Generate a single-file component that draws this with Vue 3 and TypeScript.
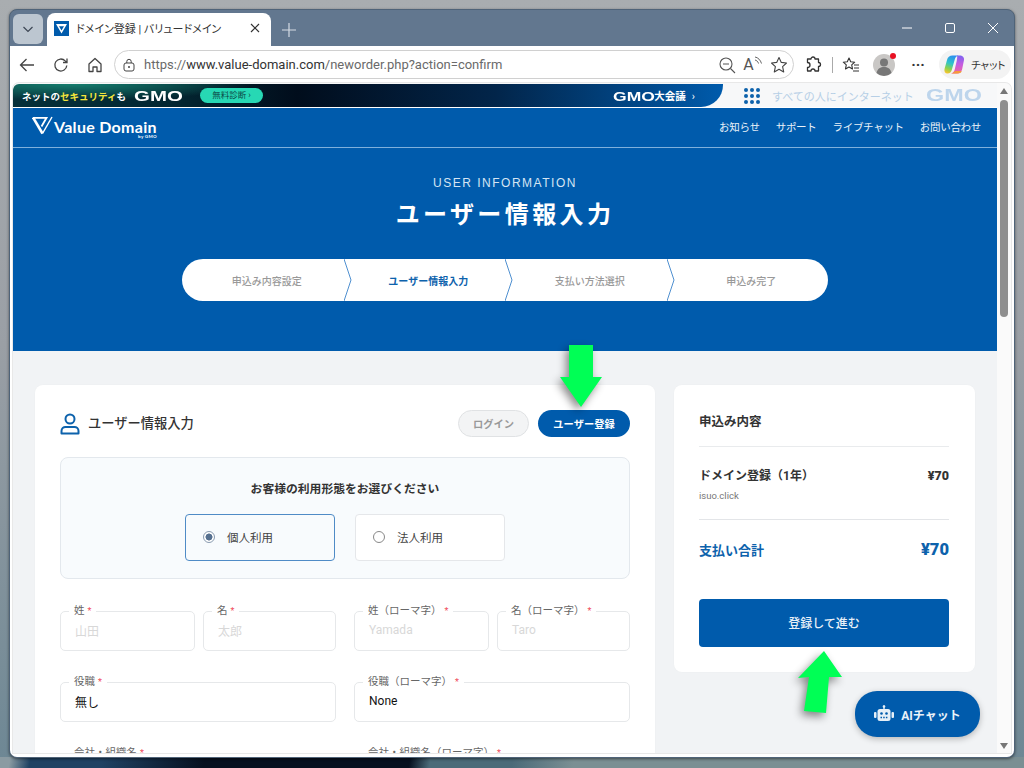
<template>
	<div class="desktop">
		<div class="window">
			<div class="tabbar">
				<button class="tab-menu">
					<svg width="14" height="14" viewBox="0 0 14 14"><path d="M2.500 5l4.500 4.500L11.500 5" fill="none" stroke="#3c4654" stroke-width="1.200" /></svg>
				</button>
				<div class="tab">
					<span class="favicon">
						<svg width="15" height="15" viewBox="0 0 15 15"><rect width="15" height="15" fill="#005bac" /><path d="M2 3h11l-5.500 9.500zM5 5.200l2.500 4.300 2.500-4.300z" fill="#fff" fill-rule="evenodd" /></svg>
					</span>
					<span class="tab-title">ドメイン登録 | バリュードメイン</span>
					<svg class="tab-close" width="10" height="10" viewBox="0 0 10 10"><path d="M1 1l8 8M9 1l-8 8" stroke="#333" stroke-width="1.200" /></svg>
				</div>
				<svg class="new-tab" width="14" height="14" viewBox="0 0 14 14"><path d="M7 0v14M0 7h14" stroke="#d5dce4" stroke-width="1.200" /></svg>
				<div class="win-controls">
					<svg width="10" height="10" viewBox="0 0 10 10"><path d="M0 5h10" stroke="#fff" stroke-width="1" /></svg>
					<svg width="10" height="10" viewBox="0 0 10 10"><rect x=".5" y=".5" width="9" height="9" rx="1.500" fill="none" stroke="#fff" /></svg>
					<svg width="10" height="10" viewBox="0 0 10 10"><path d="M0 0l10 10M10 0L0 10" stroke="#fff" stroke-width="1" /></svg>
				</div>
			</div>

			<div class="frame">
				<div class="toolbar">
					<svg class="tool" width="18" height="18" viewBox="0 0 18 18"><path d="M16 9H2.500M8.500 3l-6 6 6 6" fill="none" stroke="#444" stroke-width="1.300" /></svg>
					<svg class="tool" width="18" height="18" viewBox="0 0 18 18"><path d="M14.800 9.500a6 6 0 1 1-1.600-4.600L15 6.500M15 2.500v4h-4" fill="none" stroke="#444" stroke-width="1.300" /></svg>
					<svg class="tool home" width="18" height="18" viewBox="0 0 18 18"><path d="M3 8l6-5.500L15 8v7.500h-4V11H7v4.500H3z" fill="none" stroke="#444" stroke-width="1.300" stroke-linejoin="round" /></svg>
					<div class="address">
						<svg width="14" height="14" viewBox="0 0 14 14"><rect x="2" y="5" width="10" height="8" rx="2" fill="none" stroke="#444" /><path d="M4.800 5V3.500a2.200 2.200 0 0 1 4.400 0V5" fill="none" stroke="#444" /><circle cx="7" cy="9" r="1" fill="#444" /></svg>
						<span class="url"><span class="url-dim">https://</span>www.value-domain.com<span class="url-dim">/neworder.php?action=confirm</span></span>
						<span class="address-icons">
							<svg width="18" height="18" viewBox="0 0 18 18"><circle cx="8" cy="8" r="6" fill="none" stroke="#555" stroke-width="1.100" /><path d="M5 8h6M12.500 12.500L17 17" stroke="#555" stroke-width="1.100" fill="none" /></svg>
							<span class="read-aloud">A<svg width="9" height="9" viewBox="0 0 9 9"><path d="M1 1c3 .5 5.500 3 6.500 6.500M1 4c1.500.3 3 1.500 3.500 3.500" fill="none" stroke="#666" /></svg></span>
							<svg width="18" height="18" viewBox="0 0 18 18"><path d="M9 1.500l2.300 4.900 5.200.6-3.900 3.600 1.100 5.300L9 13.200l-4.700 2.700 1.100-5.300L1.500 7l5.200-.6z" fill="none" stroke="#444" stroke-width="1.100" stroke-linejoin="round" /></svg>
						</span>
					</div>
					<svg class="tool puzzle" width="18" height="18" viewBox="0 0 18 18"><path d="M7 3a2 2 0 0 1 4 0h3.500v3.500a2 2 0 0 1 0 4V15H11a2 2 0 0 0-4 0H3.500v-3.500a2.500 2.500 0 0 0 0-5V3z" fill="none" stroke="#333" stroke-width="1.300" stroke-linejoin="round" /></svg>
					<span class="tool-sep"></span>
					<svg class="tool favs" width="18" height="18" viewBox="0 0 18 18"><path d="M7 2l1.700 3.700 4 .5-3 2.700.8 4L7 11l-3.500 1.900.8-4-3-2.700 4-.5zM12 9h5M12 12h5M11 15h6" fill="none" stroke="#333" stroke-width="1.100" stroke-linejoin="round" /></svg>
					<span class="avatar">
						<svg width="22" height="22" viewBox="0 0 22 22"><circle cx="11" cy="11" r="11" fill="#c9c7c5" /><circle cx="11" cy="8.500" r="4" fill="#777" /><path d="M3.500 19c1-4.500 4-6 7.500-6s6.500 1.500 7.500 6a11 11 0 0 1-15 0z" fill="#777" /></svg>
						<span class="avatar-dot"></span>
					</span>
					<span class="more">···</span>
					<div class="copilot">
						<svg width="21" height="21" viewBox="0 0 21 21">
							<defs>
								<linearGradient id="copilot-left" x1="0.600" y1="0" x2="0.300" y2="1">
									<stop offset="0" stop-color="#2b8df0" />
									<stop offset="0.450" stop-color="#2fc4c8" />
									<stop offset="0.750" stop-color="#8ad24e" />
									<stop offset="1" stop-color="#f5c52e" />
								</linearGradient>
								<linearGradient id="copilot-right" x1="0.500" y1="0" x2="0.500" y2="1">
									<stop offset="0" stop-color="#7b63f0" />
									<stop offset="0.500" stop-color="#c65be0" />
									<stop offset="1" stop-color="#f0649c" />
								</linearGradient>
							</defs>
							<path d="M8.500 1.500h6c-2 .5-3 1.500-3.600 3.500l-3 10.500c-.6 2.500-2 4-4.400 4-2.500 0-3.500-2-3-4.500L3 6C3.700 3 5.500 1.500 8.500 1.500z" fill="url(#copilot-left)" />
							<path d="M13 1.500h2.500c3 0 5 2 4.500 4.500l-1.800 9c-.6 3-2.700 4.500-5.200 4.500H7c2-.5 3.200-2 3.700-4l2-8.500C13 5 13.500 3 13 1.500z" fill="url(#copilot-right)" />
							<path d="M7 19.500h7c1.700 0 3-.8 3.800-2.200-2.300-.5-5-.3-6.800-.3-.8 1.300-2.200 2.200-4 2.500z" fill="#f59a3c" />
						</svg>
						<span>チャット</span>
					</div>
				</div>

				<div class="viewport">
					<div class="page">
						<div class="gmo-bar">
							<div class="gmo-left">
								<span class="gmo-copy">ネットの<em>セキュリティ</em>も</span>
								<span class="gmo-logo">GMO</span>
								<span class="gmo-pill">無料診断 ›</span>
								<span class="gmo-event"><span class="gmo-logo small">GMO</span>大会議<span class="gmo-caret">›</span></span>
							</div>
							<div class="gmo-right">
								<span class="dots"><i v-for="n in 9" :key="n"></i></span>
								<span class="gmo-tagline">すべての人にインターネット</span>
								<span class="gmo-logo pale">GMO</span>
							</div>
						</div>

						<header class="hero">
							<nav class="site-nav">
								<div class="brand">
									<svg width="21" height="19" viewBox="0 0 21 19">
										<path d="M1 1.500L10.500 17.500" fill="none" stroke="#fff" stroke-width="2.600" />
										<path d="M10.500 17.500L20 1" fill="none" stroke="#fff" stroke-width="1.500" />
										<path d="M1 1.800H14.500L9.500 10.500" fill="none" stroke="#fff" stroke-width="1.800" />
									</svg>
									<div class="brand-text">
										<span>Value Domain</span>
										<small>by GMO</small>
									</div>
								</div>
								<div class="nav-links">
									<a v-for="link in navLinks" :key="link">{{ link }}</a>
								</div>
							</nav>
							<p class="hero-sub">USER INFORMATION</p>
							<h1 class="hero-title">ユーザー情報入力</h1>
							<ol class="steps">
								<li v-for="(step, i) in steps" :key="step" :class="{ current: i === 1 }">
									<span>{{ step }}</span>
									<svg v-if="i < steps.length - 1" class="chevron" width="8" height="42" viewBox="0 0 8 42"><path d="M0 0l7 21-7 21" fill="none" stroke="#4f8fd0" /></svg>
								</li>
							</ol>
						</header>

						<main class="content">
							<section class="card form-card">
								<div class="form-head">
									<svg width="20" height="22" viewBox="0 0 20 22"><circle cx="10" cy="6" r="4.500" fill="none" stroke="#0d62ac" stroke-width="2" /><path d="M1.500 20.500v-2.500c0-2.500 2-4 4-4h9c2 0 4 1.500 4 4v2.500z" fill="none" stroke="#0d62ac" stroke-width="2" stroke-linejoin="round" /></svg>
									<h2>ユーザー情報入力</h2>
									<button class="pill login">ログイン</button>
									<button class="pill register">ユーザー登録</button>
								</div>

								<div class="usage">
									<h3>お客様の利用形態をお選びください</h3>
									<div class="usage-options">
										<label class="option selected"><span class="radio"></span><span>個人利用</span></label>
										<label class="option"><span class="radio"></span><span>法人利用</span></label>
									</div>
								</div>

								<div class="fields">
									<div v-for="(group, g) in fieldGroups" :key="g" class="field-group" :class="{ pair: group.length > 1 }">
										<div v-for="f in group" :key="f.label" class="field">
											<span class="field-label">{{ f.label }}<b>*</b></span>
											<span class="field-value" :class="{ empty: f.placeholder }">{{ f.value || f.placeholder }}</span>
										</div>
									</div>
								</div>
							</section>

							<aside class="card summary">
								<h2>申込み内容</h2>
								<div class="summary-item">
									<div class="summary-row"><span>ドメイン登録（1年）</span><strong>¥70</strong></div>
									<p>isuo.click</p>
								</div>
								<div class="summary-total"><span>支払い合計</span><strong>¥70</strong></div>
								<button class="proceed">登録して進む</button>
							</aside>
						</main>
					</div>

					<div class="scrollbar">
						<span class="arrow up"></span>
						<span class="thumb"></span>
						<span class="arrow down"></span>
					</div>

					<button class="ai-chat">
						<svg width="20" height="18" viewBox="0 0 20 18"><rect x="3.500" y="4" width="13" height="12" rx="2.500" fill="#e6eff7" /><rect x="9.300" y="0.500" width="1.400" height="4" fill="#e6eff7" /><circle cx="10" cy="1.500" r="1.300" fill="#e6eff7" /><rect x="0" y="7" width="2.500" height="6" rx="1" fill="#e6eff7" /><rect x="17.500" y="7" width="2.500" height="6" rx="1" fill="#e6eff7" /><circle cx="7.500" cy="8.500" r="1.300" fill="#005bac" /><circle cx="12.500" cy="8.500" r="1.300" fill="#005bac" /><path d="M6.500 12.500h7" stroke="#005bac" stroke-width="1.300" stroke-dasharray="1.500 1.200" /></svg>
						AIチャット
					</button>

					<svg class="mark mark-down" width="42" height="62" viewBox="0 0 42 62"><path d="M9 0h24v32h9L21 62 0 32h9z" fill="#00ff55" /></svg>
					<svg class="mark mark-up" width="44" height="64" viewBox="0 0 44 64"><path d="M26 0l18 26-13 0-3 36-22-2 5-34-11 1z" fill="#00ff55" /></svg>
				</div>
			</div>
		</div>
	</div>
</template>

<script setup lang="ts">
interface Field {
	label: string
	value?: string
	placeholder?: string
}

const navLinks = ['お知らせ', 'サポート', 'ライブチャット', 'お問い合わせ']
const steps = ['申込み内容設定', 'ユーザー情報入力', '支払い方法選択', '申込み完了']

const fieldGroups: Field[][] = [
	[{ label: '姓', placeholder: '山田' }, { label: '名', placeholder: '太郎' }],
	[{ label: '姓（ローマ字）', placeholder: 'Yamada' }, { label: '名（ローマ字）', placeholder: 'Taro' }],
	[{ label: '役職', value: '無し' }],
	[{ label: '役職（ローマ字）', value: 'None' }],
	[{ label: '会社・組織名' }],
	[{ label: '会社・組織名（ローマ字）' }],
]
</script>

<style>
html,
body {
	margin: 0;
	overflow: hidden;
}
</style>

<style scoped>
* {
	box-sizing: border-box;
}

.desktop {
	width: 1024px;
	height: 768px;
	padding: 9px;
	overflow: hidden;
	font-family: Roboto, 'Noto Sans CJK JP', sans-serif;
	background:
		linear-gradient(100deg, #8b9ba2 0 1%, #1f4263 3% 10%, #06101f 20% 40%, #4a6a78 42% 50%, #7b8f93 56% 100%) bottom / 100% 11px no-repeat,
		linear-gradient(180deg, #a9adb0 0%, #9a9fa5 45%, #6d8794 100%);
}

.window {
	display: flex;
	flex-direction: column;
	width: 1006px;
	height: 749px;
	overflow: hidden;
	border: 1px solid #4f6378;
	border-radius: 8px;
	background: #62778f;
	box-shadow: 0 1px 3px rgb(0 0 0 / 50%);
}

.tabbar {
	display: flex;
	align-items: center;
	flex: none;
	height: 36px;
	padding: 3px 0 0 3px;
}

.tab-menu {
	display: flex;
	align-items: center;
	justify-content: center;
	width: 30px;
	height: 30px;
	margin-bottom: 2px;
	padding: 0;
	border: none;
	border-radius: 6px;
	background: #bcc6d0;
}

.tab {
	display: flex;
	align-items: center;
	gap: 7px;
	width: 224px;
	height: 33px;
	margin-left: 4px;
	padding: 0 11px 3px 7px;
	border-radius: 8px 8px 0 0;
	background: #fff;
}

.favicon {
	display: flex;
}

.tab-title {
	flex: 1;
	font-size: 11px;
	font-feature-settings: 'palt';
	color: #333;
	white-space: nowrap;
}

.new-tab {
	margin-left: 11px;
}

.win-controls {
	display: flex;
	gap: 33px;
	margin-left: auto;
	padding-right: 16px;
	padding-bottom: 4px;
}

.frame {
	flex: 1;
	padding: 0 3px 4px;
	background: #fff;
}

.toolbar {
	display: flex;
	align-items: center;
	height: 37px;
	padding-left: 5px;
}

.toolbar > * {
	flex: none;
}

.tool {
	margin-right: 16px;
}

.tool.home {
	margin-right: 10px;
}

.address {
	display: flex;
	align-items: center;
	gap: 8px;
	width: 680px;
	height: 29px;
	padding-left: 7px;
	border: 1px solid #d0d0d0;
	border-radius: 15px;
}

.url {
	font-size: 13px;
	color: #333;
	white-space: nowrap;
}

.url-dim {
	color: #6a6a6a;
}

.address-icons {
	display: flex;
	align-items: center;
	gap: 7px;
	margin-left: auto;
	padding-right: 5px;
}

.read-aloud {
	display: flex;
	align-items: flex-start;
	justify-content: center;
	width: 20px;
	font-size: 16px;
	line-height: 18px;
	color: #555;
}

.tool.puzzle {
	margin-left: 10px;
	margin-right: 10px;
}

.tool-sep {
	width: 1px;
	height: 16px;
	margin-right: 9px;
	background: #aaa;
}

.tool.favs {
	margin-right: 13px;
}

.avatar {
	position: relative;
	display: flex;
	margin-right: 15px;
}

.avatar-dot {
	position: absolute;
	top: -1px;
	right: -1px;
	width: 6px;
	height: 6px;
	border-radius: 50%;
	background: #e81123;
}

.more {
	width: 16px;
	margin-right: 13px;
	font-size: 15px;
	font-weight: 700;
	text-align: center;
	color: #333;
}

.copilot {
	display: flex;
	align-items: center;
	gap: 6px;
	width: 72px;
	height: 29px;
	padding-left: 5px;
	border-radius: 15px;
	background: #f3f3f3;
	font-size: 10.500px;
	font-feature-settings: 'palt';
	white-space: nowrap;
	color: #333;
}

.viewport {
	position: relative;
	width: 998px;
	height: 670px;
	overflow: hidden;
	border-radius: 6px 6px 0 0;
	background: #f1f3f5;
	box-shadow: 0 0 0 1px #e8e8e8;
}

.page {
	width: 984px;
}

.gmo-bar {
	display: flex;
	height: 25px;
	padding-top: 1px;
	border-bottom: 1px solid #fff;
	background: #f7f8f9;
}

.gmo-left {
	display: flex;
	align-items: center;
	flex: none;
	width: 710px;
	padding-left: 9px;
	border-radius: 6px 0 22px 0;
	background:
		radial-gradient(ellipse 180px 16px at 60px 0, rgb(25 140 120 / 85%), transparent),
		linear-gradient(90deg, #05303a 0%, #032732 22%, #010d1c 40%, #02254a 68%, #005bac 100%);
	color: #fff;
}

.gmo-copy {
	font-size: 9.500px;
	font-weight: 700;
	white-space: nowrap;
}

.gmo-copy em {
	font-style: normal;
	color: #f5e63c;
}

.gmo-logo {
	display: inline-block;
	flex: none;
	width: 49px;
	margin-left: 8px;
	font-family: 'Liberation Sans', sans-serif;
	font-size: 14px;
	font-weight: 700;
	line-height: 14px;
	white-space: nowrap;
	transform: scaleX(1.460);
	transform-origin: left center;
}

.gmo-logo.small {
	width: 41px;
	margin-left: 0;
	font-size: 12px;
	vertical-align: -1px;
}

.gmo-logo.pale {
	width: 58px;
	margin-left: 12px;
	font-size: 16px;
	color: #bdd5ec;
}

.gmo-pill {
	flex: none;
	width: 63px;
	margin-left: 17px;
	border-radius: 8px;
	background: #27d8b4;
	font-size: 8.500px;
	line-height: 15px;
	text-align: center;
	color: #0b4a48;
}

.gmo-event {
	margin-left: auto;
	padding-right: 28px;
	font-size: 10.500px;
	font-weight: 700;
	white-space: nowrap;
}

.gmo-caret {
	margin-left: 6px;
	font-weight: 400;
}

.gmo-right {
	display: flex;
	align-items: center;
	flex: none;
	padding-left: 21px;
}

.dots {
	display: grid;
	grid-template-columns: repeat(3, 4px);
	gap: 2px;
}

.dots i {
	width: 4px;
	height: 4px;
	border-radius: 50%;
	background: #0d62ac;
}

.gmo-tagline {
	margin-left: 12px;
	font-size: 11px;
	color: #b6cfe6;
	white-space: nowrap;
}

.hero {
	height: 243px;
	background: #005bac;
	color: #fff;
}

.site-nav {
	display: flex;
	align-items: center;
	justify-content: space-between;
	height: 40px;
	padding: 0 16px 2px 19px;
	border-bottom: 1px solid #7fb0dc;
}

.brand {
	display: flex;
	align-items: flex-start;
	gap: 1px;
	margin-top: 1px;
}

.brand-text {
	display: flex;
	flex-direction: column;
	margin-top: 3px;
	font-family: Lato, sans-serif;
	font-size: 16px;
	font-weight: 700;
	line-height: 15px;
	letter-spacing: 0.300px;
}

.brand-text small {
	align-self: flex-end;
	font-size: 4.500px;
	line-height: 5px;
}

.nav-links {
	display: flex;
	gap: 16px;
	font-size: 10.500px;
	letter-spacing: -0.300px;
	color: #eaf2f9;
}

.hero-sub {
	margin: 28px 0 0;
	font-family: 'Liberation Sans', sans-serif;
	font-size: 12px;
	line-height: 14px;
	letter-spacing: 1.500px;
	text-align: center;
	color: #d5e5f3;
}

.hero-title {
	margin: 8px 0 0;
	font-size: 24px;
	font-weight: 700;
	line-height: 34px;
	letter-spacing: 3.400px;
	text-align: center;
}

.steps {
	display: flex;
	width: 646px;
	height: 42px;
	margin: 27px auto 0;
	padding: 0;
	border-radius: 21px;
	background: #fff;
	list-style: none;
}

.steps li {
	position: relative;
	display: flex;
	align-items: center;
	justify-content: center;
	flex: 1;
	padding-left: 8px;
	font-size: 10px;
	font-weight: 500;
	color: #999;
}

.steps li.current {
	font-weight: 700;
	color: #0d62ac;
}

.chevron {
	position: absolute;
	top: 0;
	left: 100%;
	z-index: 1;
}

.content {
	display: flex;
	align-items: flex-start;
	gap: 19px;
	padding: 34px 22px 0;
}

.card {
	border-radius: 8px;
	background: #fff;
	box-shadow: 0 0 2px rgb(0 0 0 / 3%);
}

.form-card {
	width: 620px;
	height: 420px;
	padding: 25px;
}

.form-head {
	display: flex;
	align-items: center;
	height: 27px;
}

.form-head h2 {
	flex: 1;
	margin: 0 0 2px 8px;
	font-size: 13.250px;
	font-weight: 500;
	color: #333;
}

.pill {
	height: 27px;
	padding: 0;
	border-radius: 14px;
	font-family: inherit;
	font-size: 10.250px;
	font-weight: 700;
}

.login {
	width: 71px;
	margin-right: 9px;
	border: 1px solid #e0e2e4;
	background: #f3f4f5;
	color: #999;
}

.register {
	width: 92px;
	border: none;
	background: #005bac;
	color: #fff;
}

.usage {
	height: 122px;
	margin-top: 20px;
	padding-top: 22px;
	border: 1px solid #e3e8ed;
	border-radius: 8px;
	background: #f8fbfd;
}

.usage h3 {
	margin: 0;
	font-size: 11.800px;
	font-weight: 700;
	line-height: 18px;
	text-align: center;
	color: #333;
}

.usage-options {
	display: flex;
	justify-content: center;
	gap: 20px;
	margin-top: 16px;
}

.option {
	display: flex;
	align-items: center;
	gap: 12px;
	width: 150px;
	height: 47px;
	padding: 0 0 2px 17px;
	border: 1px solid #e5e7ea;
	border-radius: 4px;
	background: #fff;
	font-size: 11.500px;
	color: #444;
}

.option.selected {
	border: 1.500px solid #4f8bc6;
	background: #f8fbfd;
}

.radio {
	width: 12px;
	height: 12px;
	border: 1px solid #888;
	border-radius: 50%;
	background: #fff;
}

.selected .radio {
	border-color: #8a9bb0;
	background: radial-gradient(circle, #56708f 0 3.200px, #fff 3.800px);
}

.fields {
	display: grid;
	grid-template-columns: 276px 276px;
	column-gap: 18px;
	row-gap: 31px;
	margin-top: 32px;
}

.field-group {
	display: grid;
}

.field-group.pair {
	grid-template-columns: 134.500px 133px;
	column-gap: 8.500px;
}

.field {
	position: relative;
	display: flex;
	align-items: center;
	height: 40px;
	padding: 0 0 2px 14px;
	border: 1px solid #e6e8ea;
	border-radius: 5px;
	background: #fff;
	font-size: 12px;
	color: #111;
}

.field-label {
	position: absolute;
	top: -9px;
	left: 8px;
	padding: 0 5px;
	background: #fff;
	font-size: 10.500px;
	line-height: 15px;
	color: #666;
	white-space: nowrap;
}

.field-label b {
	margin-left: 3px;
	font-size: 9px;
	font-weight: 400;
	color: #ef4b5a;
}

.field-value.empty {
	color: #d8d8d8;
}

.summary {
	width: 301px;
	height: 287px;
	padding: 25px 26px 25px 25px;
}

.summary h2 {
	height: 37px;
	margin: 0;
	border-bottom: 1px solid #e9ebed;
	font-size: 12.500px;
	font-weight: 700;
	line-height: 24px;
	color: #333;
}

.summary-item {
	height: 73px;
	padding-top: 19px;
	border-bottom: 1px solid #e3e5e8;
}

.summary-row {
	display: flex;
	justify-content: space-between;
	font-size: 12px;
	font-weight: 700;
	line-height: 20px;
	color: #333;
}

.summary-row strong {
	font-size: 12.500px;
}

.summary-item p {
	margin: 3px 0 0;
	font-size: 9.500px;
	line-height: 14px;
	color: #777;
}

.summary-total {
	display: flex;
	align-items: center;
	justify-content: space-between;
	height: 62px;
	padding-bottom: 3px;
	font-size: 13px;
	font-weight: 700;
	color: #0d62ac;
}

.summary-total strong {
	font-size: 16.500px;
}

.proceed {
	display: block;
	width: 100%;
	height: 48px;
	margin-top: 17px;
	padding: 0 0 2px;
	border: none;
	border-radius: 4px;
	background: #005bac;
	font-family: inherit;
	font-size: 12px;
	font-weight: 500;
	color: #e8f0f8;
}

.scrollbar {
	position: absolute;
	top: 0;
	right: 0;
	bottom: 0;
	display: flex;
	flex-direction: column;
	align-items: center;
	width: 14px;
	background: #fafafa;
}

.thumb {
	width: 8px;
	height: 217px;
	margin-top: 6px;
	border-radius: 4px;
	background: #8f8f8f;
}

.arrow {
	width: 0;
	height: 0;
	border-left: 4px solid transparent;
	border-right: 4px solid transparent;
}

.arrow.up {
	margin-top: 5px;
	border-bottom: 6px solid #777;
}

.arrow.down {
	margin-top: auto;
	margin-bottom: 4px;
	border-top: 6px solid #777;
}

.ai-chat {
	position: absolute;
	top: 608px;
	left: 842px;
	display: flex;
	align-items: center;
	justify-content: center;
	gap: 7px;
	width: 125px;
	height: 46px;
	padding: 0;
	border: none;
	border-radius: 22px;
	background: #005bac;
	box-shadow: 0 2px 6px rgb(0 0 0 / 25%);
	font-family: inherit;
	font-size: 12px;
	font-weight: 700;
	color: #eaf2f9;
}

.mark {
	position: absolute;
	filter: drop-shadow(-3px 4px 4px rgb(0 0 0 / 45%));
}

.mark-down {
	top: 262px;
	left: 547px;
}

.mark-up {
	top: 568px;
	left: 785px;
}
</style>
